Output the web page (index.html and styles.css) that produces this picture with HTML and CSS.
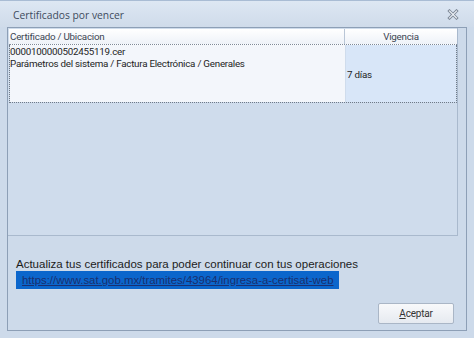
FILE: index.html
```html
<!DOCTYPE html>
<html lang="es">
<head>
  <meta charset="UTF-8">
  <title>Certificados por vencer</title>
  <link rel="stylesheet" href="styles.css">
</head>
<body>

  <div class="ventana">
    <div class="titulo">
      <span>Certificados por vencer</span>
      <svg class="cerrar" width="12" height="11" viewBox="0 0 12 11">
        <path d="M2.5 2 L9.5 9 M9.5 2 L2.5 9" stroke="#7d8796" stroke-width="3" stroke-linecap="square" fill="none"/>
        <path d="M2.5 2 L9.5 9 M9.5 2 L2.5 9" stroke="#eef2f7" stroke-width="1.1" stroke-linecap="square" fill="none"/>
      </svg>
    </div>

    <div class="marco">
      <div class="panel-grid">
        <div class="grid">
          <div class="encabezado">
            <div class="col-cert">Certificado / Ubicacion</div>
            <div class="col-vig">Vigencia</div>
          </div>
          <div class="fila">
            <div class="celda-cert">
              <div>0000100000502455119.cer</div>
              <div>Parámetros del sistema / Factura Electrónica / Generales</div>
            </div>
            <div class="celda-vig">7 días</div>
          </div>
        </div>
      </div>

      <div class="pie">
        <p class="aviso">Actualiza tus certificados para poder continuar con tus operaciones</p>
        <div class="enlace"><a href="#">https://www.sat.gob.mx/tramites/43964/ingresa-a-certisat-web</a></div>
        <div class="botones">
          <button><u>A</u>ceptar</button>
        </div>
      </div>
    </div>
  </div>

</body>
</html>
```

FILE: styles.css
```css
body {
  margin: 0;
  background: #cddaea;
  font-family: Roboto, sans-serif;
}

.ventana {
  width: 474px;
  height: 338px;
  border-top: 1px solid #a9bcd4;
  box-sizing: border-box;
}

.titulo {
  height: 26px;
  padding: 1px 13px 0 13px;
  box-sizing: border-box;
  display: flex;
  justify-content: space-between;
  align-items: center;
  background: linear-gradient(#dde7f3, #cfdbea);
  color: #3e4b5d;
  font-family: "Open Sans", sans-serif;
  font-size: 10.3px;
}

.cerrar {
  margin-right: 2px;
}

.marco {
  margin: 0 7px;
  height: 304px;
  border: 1px solid #8d9fb6;
  box-sizing: border-box;
  display: flex;
  flex-direction: column;
}

.panel-grid {
  width: 450px;
  height: 208px;
  padding: 1px 0 0 1px;
  box-sizing: border-box;
  border-right: 1px solid #a9b9cd;
  border-bottom: 1px solid #a9b9cd;
  background: #cfdcec;
}

.grid {
  width: 448px;
  font-size: 9.8px;
  letter-spacing: -0.25px;
  color: #1e1e1e;
}

.encabezado {
  display: flex;
  height: 15px;
  background: linear-gradient(#ffffff, #eef2f8);
  border-bottom: 1px dotted #7f8a98;
  color: #3b4552;
}

.col-cert {
  width: 336px;
  box-sizing: border-box;
  padding-left: 1px;
  border-right: 1px solid #b9c6d6;
  line-height: 15px;
}

.col-vig {
  flex: 1;
  text-align: center;
  line-height: 15px;
}

.fila {
  display: flex;
  height: 58px;
  border: 1px dotted #6f7a88;
  border-top: none;
  box-sizing: border-box;
}

.celda-cert {
  width: 335px;
  background: #f3f6fb;
  line-height: 12px;
  padding-top: 1px;
  border-right: 1px solid #cfdcec;
}

.celda-vig {
  flex: 1;
  background: #d8e6f8;
  display: flex;
  align-items: center;
  padding-left: 1px;
  padding-top: 2px;
}

.pie {
  flex: 1;
  padding: 21px 0 0 8px;
  font-family: "Liberation Sans", Arial, sans-serif;
}

.aviso {
  margin: 0;
  font-size: 11.5px;
  color: #1c1c1c;
  line-height: 14px;
}

.enlace {
  margin-top: 0;
  background: #0b66cc;
  width: 323px;
  height: 18px;
  box-sizing: border-box;
  padding-left: 6px;
  line-height: 18px;
  white-space: nowrap;
  font-size: 11.4px;
}

.enlace a {
  color: #1a2f6e;
  text-decoration: underline;
}

.botones {
  display: flex;
  justify-content: flex-end;
  padding-right: 12px;
  margin-top: 14px;
}

button {
  width: 76px;
  height: 21px;
  font-family: Roboto, sans-serif;
  font-size: 10px;
  letter-spacing: -0.2px;
  color: #333;
  background: linear-gradient(#f8f9fb, #e6eaf0);
  border: 1px solid #aab6c6;
  border-radius: 2px;
}
```
